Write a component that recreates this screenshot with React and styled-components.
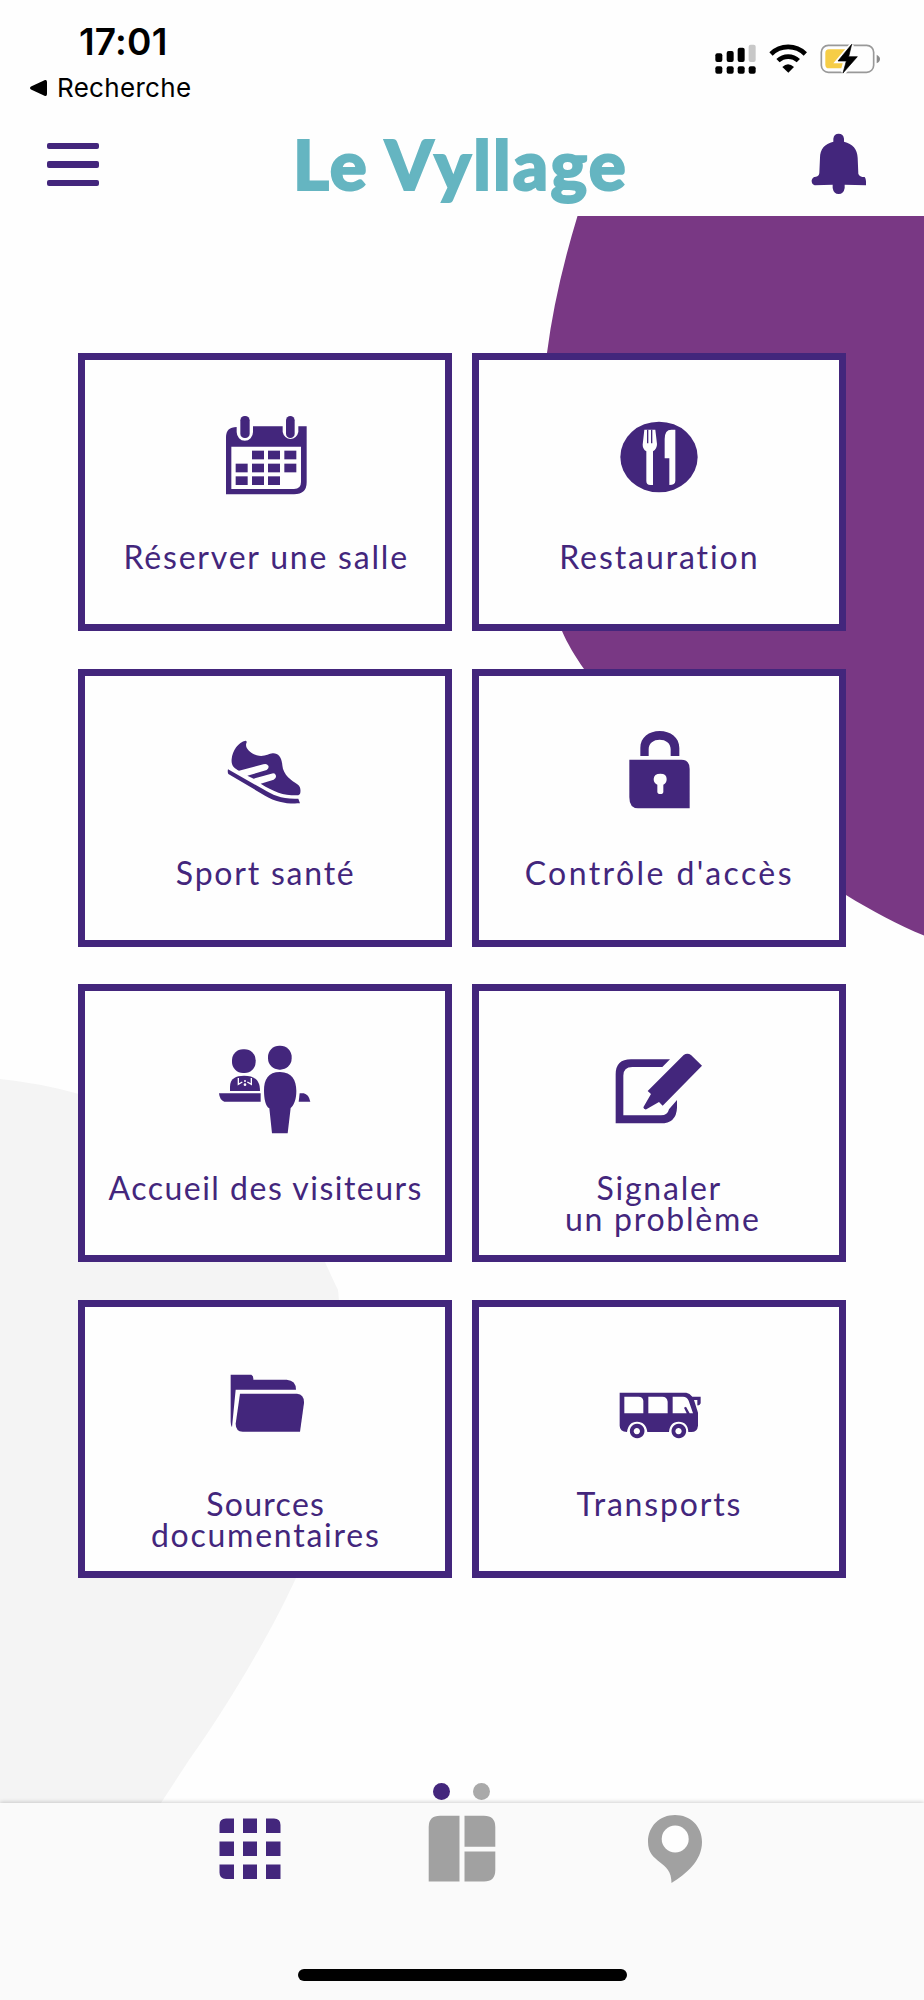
import React from 'react'
import styled, { createGlobalStyle } from 'styled-components'

const INDIGO = '#43267c'
const PURPLE = '#793884'
const GREY = '#a1a1a1'

const GlobalStyle = createGlobalStyle`
  * {
    box-sizing: border-box;
  }
  body {
    margin: 0;
    background: #fefefe;
  }
`
const Screen = styled.div`
  display: flex;
  flex-direction: column;
  width: 924px;
  height: 2000px;
  overflow: hidden;
  background: #fefefe;
  color: ${INDIGO};
  font-family: Lato, sans-serif;
`
const StatusBar = styled.div`
  display: flex;
  justify-content: space-between;
  height: 110px;
  padding: 22px 41px 0 29px;
  color: #000;
  font-family: Inter, sans-serif;
`
const Clock = styled.div`
  padding-left: 50px;
  font-size: 37px;
  font-weight: 600;
  line-height: 40px;
  letter-spacing: 0.2px;
`
const BackLink = styled.div`
  display: flex;
  align-items: center;
  gap: 10px;
  margin-top: 11px;
  font-size: 26px;
  line-height: 30px;
  letter-spacing: 0.3px;
`
const StatusIcons = styled.svg`
  width: 168px;
  height: 34px;
  margin: 20px 1px 0 0;
`
const Header = styled.header`
  display: flex;
  justify-content: space-between;
  height: 106px;
  padding: 0 57px 0 47px;
`
const MenuButton = styled.button`
  display: flex;
  flex-direction: column;
  gap: 12px;
  width: 52px;
  height: 44px;
  margin-top: 32.5px;
  padding: 0;
  border: 0;
  background: none;
`
const MenuBar = styled.span`
  width: 52px;
  height: 6.6px;
  border-radius: 2px;
  background: ${INDIGO};
`
const Title = styled.h1`
  margin: 14px 0 0 11px;
  color: #65b5c1;
  font-size: 69px;
  font-weight: 900;
  line-height: 80px;
  letter-spacing: 2.3px;
  -webkit-text-stroke: 2px #65b5c1;
`
const Bell = styled.svg`
  width: 56px;
  height: 62px;
  margin-top: 23px;
  fill: ${INDIGO};
`
const Main = styled.main`
  position: relative;
  display: flex;
  flex-direction: column;
  justify-content: space-between;
  align-items: center;
  height: 1587px;
  padding: 137px 0 3.5px;
`
const Backdrop = styled.svg`
  position: absolute;
  top: 0;
  left: 0;
  width: 924px;
  height: 1587px;
`
const Grid = styled.div`
  position: relative;
  display: grid;
  grid-template-columns: repeat(2, 374px);
  grid-auto-rows: 278px;
  gap: 37.67px 19.6px;
`
const Card = styled.a`
  display: flex;
  flex-direction: column;
  align-items: center;
  border: 7px solid ${INDIGO};
  background: #fefefe;
`
const CardIcon = styled.svg`
  width: 120px;
  height: 100px;
  margin: 46.5px 0 34.5px;
  fill: ${INDIGO};
`
const Label = styled.span`
  padding-left: ${props => props.$indent || 1}px;
  font-size: 32px;
  line-height: 31px;
  letter-spacing: ${props => props.$spacing}px;
  white-space: nowrap;
`
const Dots = styled.div`
  position: relative;
  display: flex;
  gap: 22.5px;
  margin-right: 1px;
`
const Dot = styled.span`
  width: 17px;
  height: 17px;
  border-radius: 50%;
  background: ${props => (props.$active ? INDIGO : '#a9a9a9')};
`
const TabBar = styled.nav`
  position: relative;
  display: flex;
  flex: 1;
  flex-direction: column;
  align-items: center;
  justify-content: space-between;
  padding: 10.5px 0 19px;
  background: #fafafa;
  box-shadow: 0 -1px 4px rgba(0, 0, 0, 0.18);
`
const Tabs = styled.div`
  display: grid;
  grid-template-columns: 209px 220px 54px;
  width: 483px;
  margin-left: -4px;
`
const TabIcon = styled.svg`
  width: ${props => props.$width}px;
  height: 72px;
  fill: ${props => (props.$active ? INDIGO : GREY)};
`
const HomeIndicator = styled.div`
  width: 329px;
  height: 12px;
  border-radius: 6px;
  background: #000;
`

const Calendar = () => (
  <CardIcon viewBox="405 199 360 300">
    <path d="M468 461V290Q468 259 500 259V274A24.500 26 0 0 0 549 274V257H638V274A24 26 0 0 0 685 274V257H710V425Q710 461 672 461ZM484 318V445H672Q693 445 693 424V318Z" fillRule="evenodd" />
    <rect x="511" y="226" width="28" height="66" rx="13" />
    <rect x="648" y="226" width="26" height="66" rx="13" />
    {[[546, 330], [594, 330], [643, 330], [497, 369], [546, 369], [594, 369], [643, 369], [497, 407], [546, 407], [594, 407]].map(([x, y]) => (
      <rect key={`${x}-${y}`} x={x} y={y} width="36" height="26" />
    ))}
  </CardIcon>
)

const Cutlery = () => (
  <CardIcon viewBox="416 199 360 300">
    <ellipse cx="596" cy="349" rx="116" ry="106" />
    <g fill="#fefefe">
      <path d="M552 267H585L590 310Q590 325 578 332V433H570Q558 433 558 421V332Q547 325 547 312Z" />
      <path d="M645 267V420Q645 433 627 433V353H613V295Q613 267 633 267Z" />
    </g>
    <path d="M560 267h4v41h-4ZM572 267h4v41h-4Z" />
  </CardIcon>
)

const Shoe = () => (
  <CardIcon viewBox="405 186 360 300">
    <path d="M527 242Q532 244 529 250C524 262 540 280 560 286C582 293 595 281 608 280C625 279 635 292 637 316C639 345 666 363 682 373C692 379 693 392 690 402L685 406C640 407 615 397 572 371L611 359Q619 356 618 347Q615 337 604 341L551 356L532 347L590 330Q598 325 595 317Q590 309 580 313L507 332C492 325 483 316 485 297C487 273 505 245 527 242Z" />
    <path d="M474 328Q472 336 475 342L585 407C620 427 650 432 690 430L685 416C635 418 610 406 580 388Z" />
  </CardIcon>
)

const Padlock = () => (
  <CardIcon viewBox="416 186 360 300">
    <path d="M540 288V264C540 232 566 213 598 213S657 232 657 264V288H631V268C631 249 616 239 598 239S565 249 565 268V288Z" />
    <path d="M507 299H663Q688 299 688 327V445H533Q507 445 507 412ZM591 374V395Q591 402 600 402T609 395V374Q619 370 619 357Q619 341 600 341T580 357Q580 370 591 374Z" fillRule="evenodd" />
  </CardIcon>
)

const Reception = () => (
  <CardIcon viewBox="405 187 360 300">
    <rect x="486" y="221" width="71" height="71" rx="33" />
    <rect x="594" y="210" width="71" height="72" rx="34" />
    <path d="M480 346V333C480 308 498 300 522 300C552 300 570 312 570 346Z" />
    <path d="M447 353H572V378H463Q449 374 447 353Z" />
    <path d="M689 353H701Q716 356 721 378H686Z" />
    <path d="M630 289C666 289 679 314 679 345C679 370 673 387 662 397L653 473H606L598 398C587 392 582 370 582 345C582 312 594 289 630 289Z" />
    <path d="M505 307V326L517 319M544 307V326L532 319" fill="none" stroke="#fefefe" strokeWidth="4" />
    <circle cx="525" cy="316" r="3" fill="#fefefe" />
    <circle cx="525" cy="327" r="4" fill="#fefefe" />
  </CardIcon>
)

const Edit = () => (
  <CardIcon viewBox="416 187 360 300">
    <path d="M629 251L606 274H516Q489 274 489 300V419H602Q622 419 626 401L650 373V396Q648 443 601 443H466V296Q466 251 512 251Z" />
    <path d="M670 238Q681 230 692 238L725 270L607 390L596 379L558 401Q550 402 549 395L572 355L562 346Z" />
  </CardIcon>
)

const Folder = () => (
  <CardIcon viewBox="405 190 360 300">
    <path d="M482 255H544Q551 258 550 270H650Q678 272 678 300H497L486 413Q482 405 482 396Z" />
    <path d="M510 312H681Q703 314 702 340L690 426H518Q497 425 497 402Z" />
  </CardIcon>
)

const Bus = () => (
  <CardIcon viewBox="416 190 360 300">
    <path d="M478 309H678Q688 311 696 321H721V341Q719 348 711 347V331H701L713 369V408Q711 427 693 427H684C684 407 673 396 655 396S628 407 626 427H561C559 407 548 396 530 396S503 407 500 427Q478 425 478 408ZM492 321V371H549V333Q547 321 535 321ZM564 321V371H622V336Q620 321 606 321ZM637 321V371H679L671 354L677 351L688 371H698L685 333Q680 321 668 321Z" fillRule="evenodd" />
    <path d="M530 402a22 22 0 1 0 1 0ZM530 415a9.500 9.500 0 1 1 -1 0ZM655 402a22 22 0 1 0 1 0ZM655 415a9.500 9.500 0 1 1 -1 0Z" fillRule="evenodd" />
  </CardIcon>
)

const cards = [
  { icon: Calendar, lines: [['Réserver une salle', 1.8, 2]] },
  { icon: Cutlery, lines: [['Restauration', 1.92]] },
  { icon: Shoe, lines: [['Sport santé', 1.78]] },
  { icon: Padlock, lines: [["Contrôle d'accès", 2.41]] },
  { icon: Reception, lines: [['Accueil des visiteurs', 1.5]] },
  { icon: Edit, lines: [['Signaler', 1.76], ['un problème', 1.74, 8]] },
  { icon: Folder, lines: [['Sources', 1.3], ['documentaires', 1.75]] },
  { icon: Bus, lines: [['Transports', 1.82]] }
]

export default function App () {
  return (
    <>
      <GlobalStyle />
      <Screen>
        <StatusBar>
          <div>
            <Clock>17:01</Clock>
            <BackLink>
              <svg width="18" height="18" viewBox="0 0 18 18">
                <path d="M16 1Q18 .5 18 3V15Q18 17.500 16 17L2 10.500Q0 9 2 7.500Z" />
              </svg>
              Recherche
            </BackLink>
          </div>
          <StatusIcons viewBox="758 125 504 102">
            {[[762, 159], [796, 152], [829, 142], [862, 133]].map(([x, y], i) => (
              <g key={x}>
                <rect x={x} y={y} width="21" height={185 - y} rx="6" fill={i === 3 ? '#c8c8c8' : '#000'} />
                <rect x={x} y="198" width="21" height="22" rx="6" />
              </g>
            ))}
            <path d="M929 161A73 73 0 0 1 1032 161M950 181A44 44 0 0 1 1011 181" fill="none" stroke="#000" strokeWidth="14" />
            <path d="M963 200Q980 184 998 200L981 217Z" />
            <rect x="1080" y="135" width="157" height="81" rx="21" fill="none" stroke="#999" strokeWidth="5" />
            <path d="M1246 163Q1256 168 1256 176T1246 189Z" fill="#8a8a8a" />
            <path d="M1103 147H1155L1140 204H1103Q1092 204 1092 193V158Q1092 147 1103 147Z" fill="#f6cd46" />
            <path d="M1171 134L1131 182H1155L1146 217L1187 170H1162Z" stroke="#fefefe" strokeWidth="14" />
            <path d="M1171 132L1130 182H1155L1145 218L1188 169H1162Z" stroke="#000" strokeLinejoin="round" strokeWidth="2" />
          </StatusIcons>
        </StatusBar>
        <Header>
          <MenuButton aria-label="Menu">
            <MenuBar />
            <MenuBar />
            <MenuBar />
          </MenuButton>
          <Title>Le Vyllage</Title>
          <Bell viewBox="1049 398 168 186">
            <path d="M1116 424V415Q1118 400 1132 400T1148 415V424C1174 430 1188 446 1189 472L1191 520Q1194 530 1210 530Q1215 535 1214 555L1150 553V563Q1147 581 1132 581T1114 563V553L1060 555Q1050 552 1051 540Q1053 530 1064 529Q1073 528 1074 518L1076 472C1076 446 1090 430 1116 424Z" />
          </Bell>
        </Header>
        <Main>
          <Backdrop viewBox="0 216 924 1587">
            <path d="M577.500 216H924V935.500C898 925 872 911 846 895C740 850 630 760 584 669C575 656 567 643 562 631C532 530 530 470 547 353Q555 290 577.500 216Z" fill={PURPLE} />
            <path d="M0 1079Q40 1083 79 1094C210 1135 300 1190 325 1262Q334 1282 338 1290C344 1340 335 1490 296 1578C270 1635 225 1710 189 1760L161 1803H0Z" fill="#f4f4f4" />
          </Backdrop>
          <Grid>
            {cards.map(({ icon: Icon, lines }) => (
              <Card key={lines[0][0]}>
                <Icon />
                {lines.map(([text, spacing, indent]) => (
                  <Label key={text} $spacing={spacing} $indent={indent}>{text}</Label>
                ))}
              </Card>
            ))}
          </Grid>
          <Dots>
            <Dot $active />
            <Dot />
          </Dots>
        </Main>
        <TabBar>
          <Tabs>
            <TabIcon $active $width={62} viewBox="0 0 62 72">
              <path d="M7 4.500H15V19H.500V11Q.500 4.500 7 4.500ZM24 4.500H38V19H24ZM47 4.500H55Q61.500 4.500 61.500 11V19H47ZM.500 27.500H15V42H.500ZM24 27.500H38V42H24ZM47 27.500H61.500V42H47ZM.500 50.500H15V65H7Q.500 65 .500 58.500ZM24 50.500H38V65H24ZM47 50.500H61.500V65H47Z" />
            </TabIcon>
            <TabIcon $width={68} viewBox="0 0 68 72">
              <path d="M12 1.700H31.500V67.500H.700V13Q.700 1.700 12 1.700ZM36.500 1.700H56Q67.300 1.700 67.300 13V32.800H36.500ZM36.500 37.500H67.300V56Q67.300 67.500 56 67.500H36.500Z" />
            </TabIcon>
            <TabIcon $width={54} viewBox="0 0 54 72">
              <path d="M27 1C42 1 54 12 54 28C54 47 38 60 23.500 69C24 46 0 50 0 28C0 12 12 1 27 1Z" />
              <circle cx="27.200" cy="25" r="13.500" fill="#fefefe" />
            </TabIcon>
          </Tabs>
          <HomeIndicator />
        </TabBar>
      </Screen>
    </>
  )
}
